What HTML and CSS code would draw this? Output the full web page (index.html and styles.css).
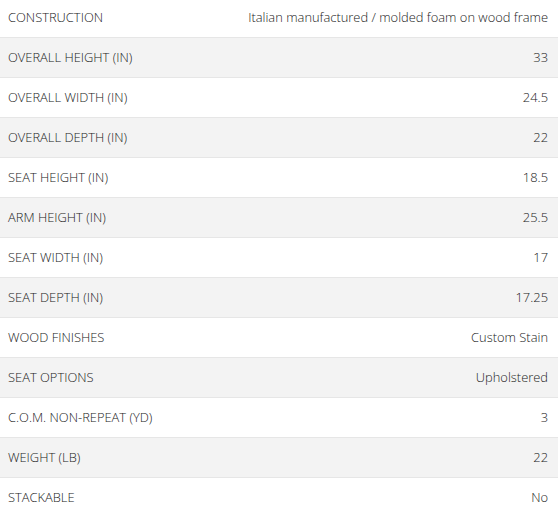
FILE: index.html
```html
<!DOCTYPE html>
<html>
<head>
<meta charset="utf-8">
<link rel="stylesheet" href="styles.css">
</head>
<body>
<table class="specs">
<tbody>
<tr><td class="label">CONSTRUCTION</td><td class="value">Italian manufactured / molded foam on wood frame</td></tr>
<tr class="alt"><td class="label">OVERALL HEIGHT (IN)</td><td class="value">33</td></tr>
<tr><td class="label">OVERALL WIDTH (IN)</td><td class="value">24.5</td></tr>
<tr class="alt"><td class="label">OVERALL DEPTH (IN)</td><td class="value">22</td></tr>
<tr><td class="label">SEAT HEIGHT (IN)</td><td class="value">18.5</td></tr>
<tr class="alt"><td class="label">ARM HEIGHT (IN)</td><td class="value">25.5</td></tr>
<tr><td class="label">SEAT WIDTH (IN)</td><td class="value">17</td></tr>
<tr class="alt"><td class="label">SEAT DEPTH (IN)</td><td class="value">17.25</td></tr>
<tr><td class="label">WOOD FINISHES</td><td class="value">Custom Stain</td></tr>
<tr class="alt"><td class="label">SEAT OPTIONS</td><td class="value">Upholstered</td></tr>
<tr><td class="label">C.O.M. NON-REPEAT (YD)</td><td class="value">3</td></tr>
<tr class="alt"><td class="label">WEIGHT (LB)</td><td class="value">22</td></tr>
<tr><td class="label">STACKABLE</td><td class="value">No</td></tr>
</tbody>
</table>
</body>
</html>
```
FILE: styles.css
```css
html, body {
  margin: 0;
  padding: 0;
  background: #ffffff;
}
body {
  font-family: "Open Sans", "Liberation Sans", sans-serif;
  font-size: 12.9px;
  font-weight: 300;
  color: #222222;
  overflow: hidden;
}
.specs {
  width: 558px;
  border-collapse: collapse;
  margin-top: -3px;
}
.specs tr {
  height: 40px;
  border-bottom: 1px solid #e6e6e6;
}
.specs tr.alt {
  background: #f3f3f3;
}
.specs td {
  padding: 0;
  vertical-align: middle;
  white-space: nowrap;
}
.label {
  padding-left: 8px !important;
  text-align: left;
}
.value {
  padding-right: 10px !important;
  text-align: right;
}
```
